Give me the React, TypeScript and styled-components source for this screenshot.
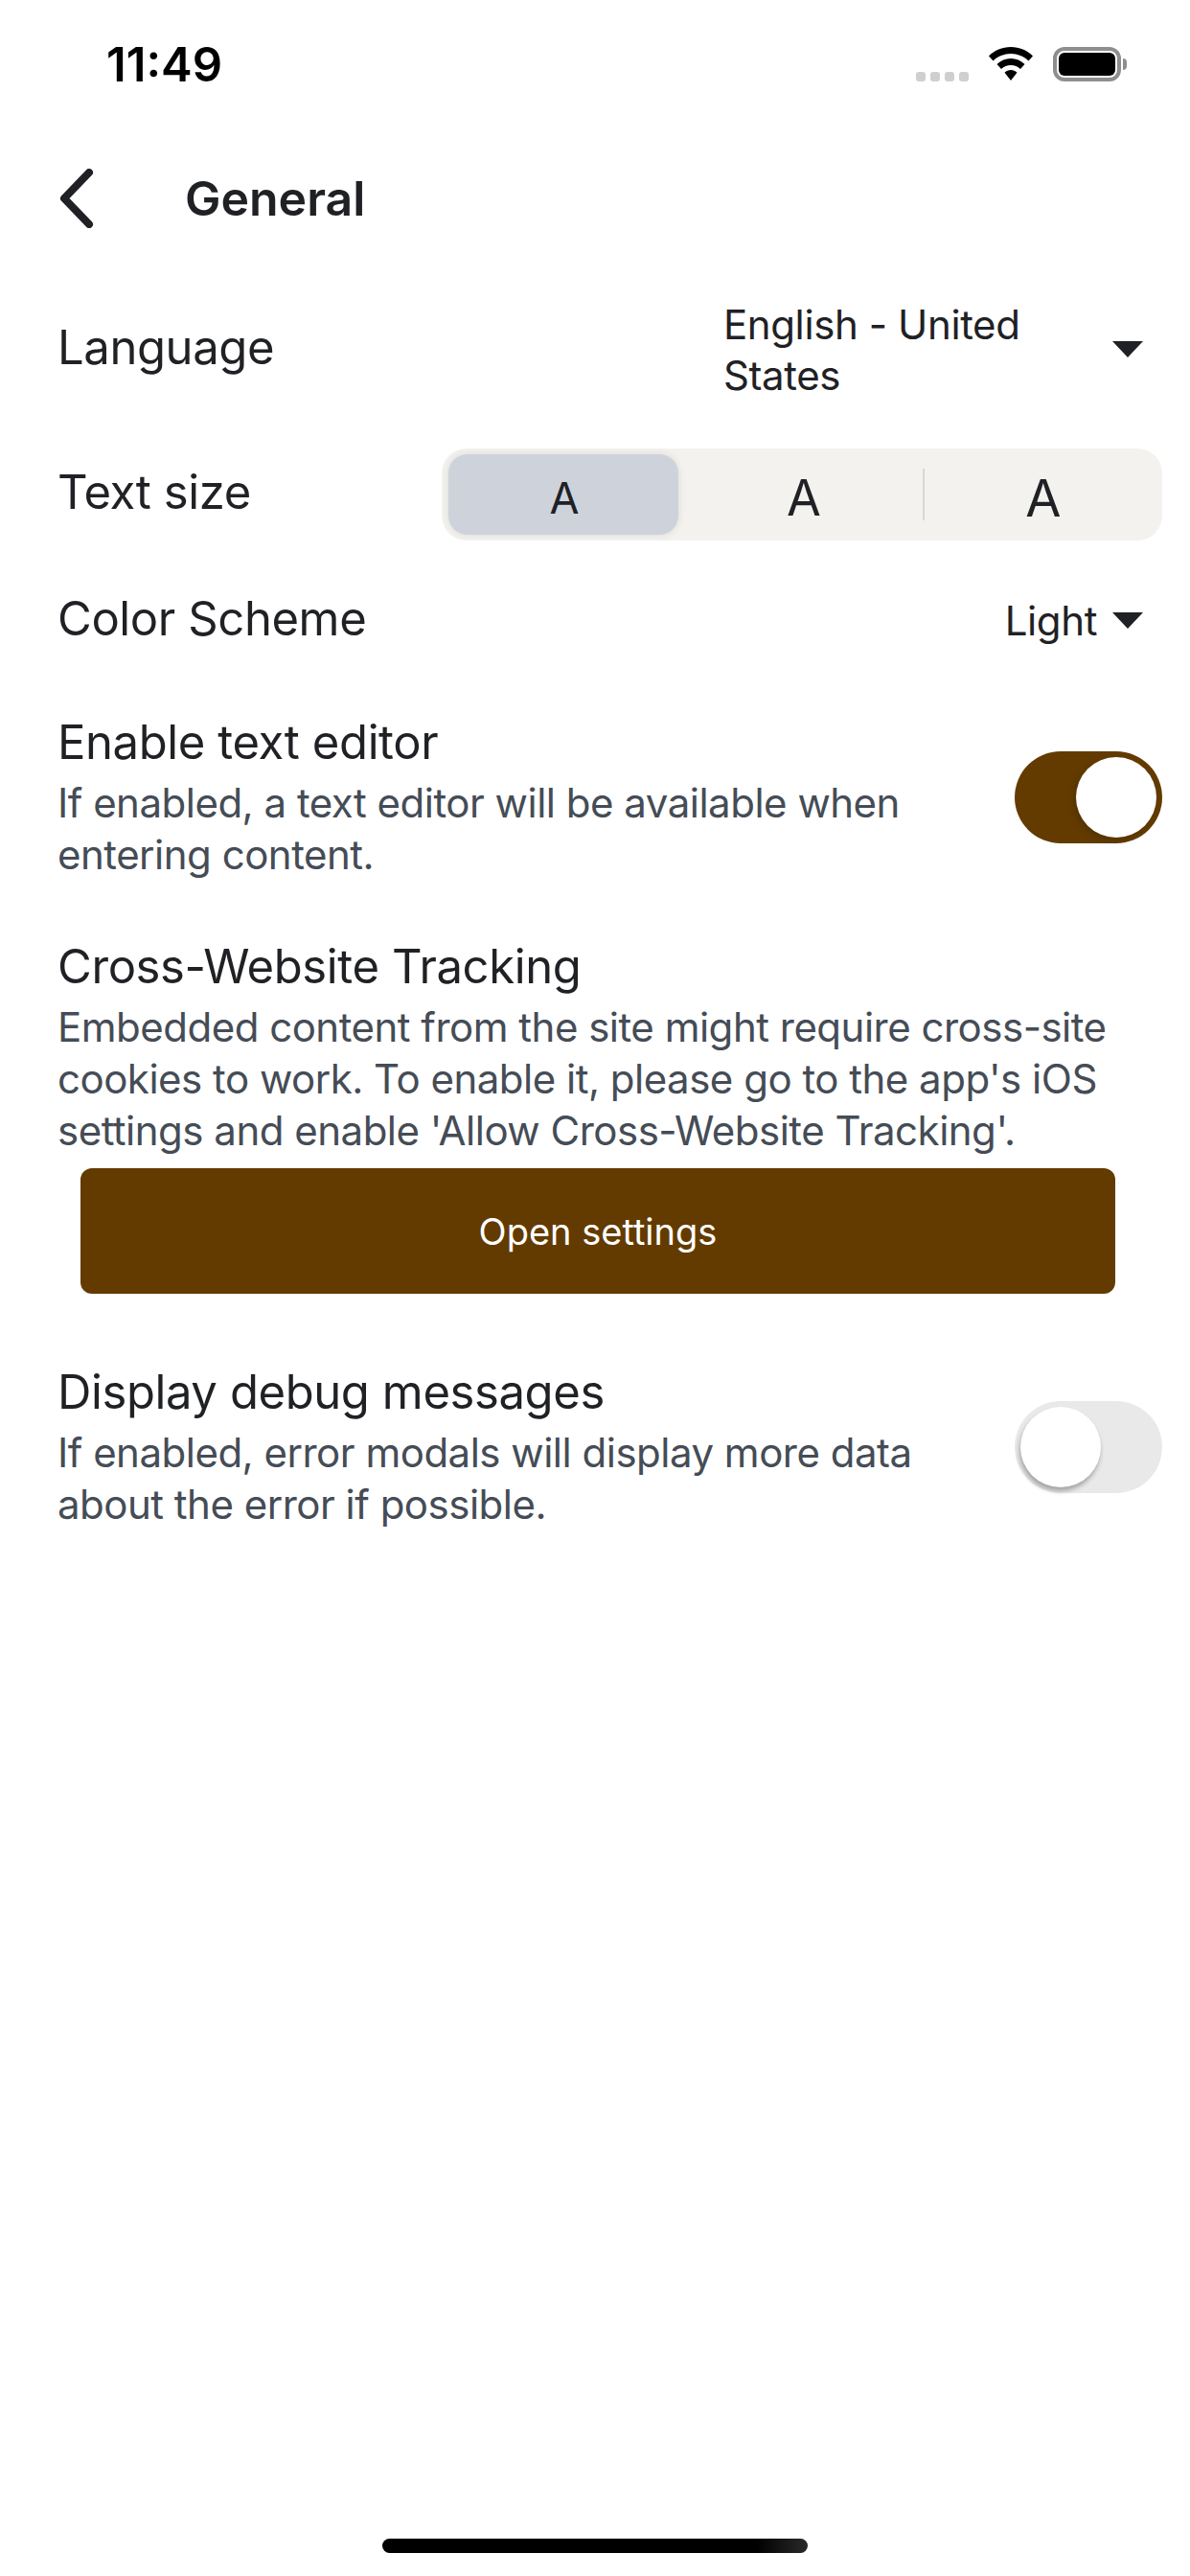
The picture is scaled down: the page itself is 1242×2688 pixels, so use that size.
import React from 'react';
import styled, { createGlobalStyle } from 'styled-components';

const GlobalStyle = createGlobalStyle`
	html, body {
		margin: 0;
		padding: 0;
		background: #fff;
	}
`;

const Screen = styled.div`
	width: 1242px;
	height: 2688px;
	display: flex;
	flex-direction: column;
	background: #fff;
	font-family: 'Inter', 'Liberation Sans', sans-serif;
	color: #1f2125;
	overflow: hidden;
`;

const StatusBar = styled.div`
	height: 132px;
	box-sizing: border-box;
	padding: 39px 72px 0 111px;
	display: flex;
	justify-content: space-between;
	align-items: flex-start;
	flex-shrink: 0;
`;

const Clock = styled.span`
	font-size: 49px;
	line-height: 58px;
	font-weight: 600;
	color: #000;
`;

const StatusIcons = styled.div`
	display: flex;
	align-items: flex-end;
	gap: 20px;
	height: 36px;
	margin-top: 10px;
`;

const SignalDots = styled.div`
	display: flex;
	gap: 5px;
`;

const SignalDot = styled.span`
	width: 10px;
	height: 10px;
	border-radius: 3px;
	background: #cfcfcf;
`;

const Battery = styled.div`
	width: 71px;
	height: 36px;
	box-sizing: border-box;
	border: 4px solid #8e8e8e;
	border-radius: 12px;
	padding: 2px;
	position: relative;

	&::before {
		content: '';
		display: block;
		height: 100%;
		border-radius: 6px;
		background: #000;
	}

	&::after {
		content: '';
		position: absolute;
		right: -10px;
		top: 8px;
		width: 4px;
		height: 12px;
		border-radius: 0 4px 4px 0;
		background: #8e8e8e;
	}
`;

const Header = styled.div`
	height: 150px;
	box-sizing: border-box;
	padding-left: 62px;
	display: flex;
	align-items: center;
	flex-shrink: 0;
`;

const BackButton = styled.button`
	width: 131px;
	padding: 0;
	border: 0;
	background: none;
	display: flex;
	align-items: center;
	color: #1f2125;
`;

const Title = styled.h1`
	margin: 0;
	font-size: 50px;
	line-height: 60px;
	font-weight: 600;
`;

const Content = styled.div`
	display: flex;
	flex-direction: column;
	padding: 0 29px 0 60px;
`;

const Row = styled.div<{ $height: number }>`
	display: flex;
	align-items: center;
	justify-content: space-between;
	height: ${(props) => props.$height}px;
`;

const Label = styled.div<{ $lift?: number }>`
	font-size: 49px;
	line-height: 60px;
	font-weight: 400;
	letter-spacing: -0.4px;
	${(props) => props.$lift && `margin-top: -${props.$lift}px;`}
`;

const LanguageValue = styled.div`
	width: 400px;
	font-size: 42px;
	line-height: 53px;
	letter-spacing: -0.4px;
`;

const Picker = styled.div<{ $width?: number }>`
	display: flex;
	align-items: center;
	justify-content: space-between;
	padding-right: 20px;
	margin-top: 3px;
	${(props) => props.$width && `width: ${props.$width}px;`}
	box-sizing: border-box;
`;

const Caret = styled.span<{ $gap?: number }>`
	width: 0;
	height: 0;
	margin-left: ${(props) => props.$gap ?? 12}px;
	border-left: 16px solid transparent;
	border-right: 16px solid transparent;
	border-top: 17px solid #1f2125;
`;

const PickerText = styled.span`
	font-size: 42px;
	line-height: 53px;
	letter-spacing: -0.4px;
`;

const Segmented = styled.div`
	width: 752px;
	height: 96px;
	box-sizing: border-box;
	padding: 6px 5px 6px 7px;
	border-radius: 26px;
	background: #f3f2ef;
	display: grid;
	grid-template-columns: repeat(3, 240px);
	gap: 10px;
`;

const Segment = styled.div<{ $active?: boolean; $size: number; $divider?: boolean }>`
	display: flex;
	align-items: center;
	justify-content: center;
	padding: 6px 0 0 2px;
	border-radius: 20px;
	font-size: ${(props) => props.$size}px;
	background: ${(props) => (props.$active ? '#ced3db' : 'transparent')};
	box-shadow: ${(props) => (props.$active ? '0 0 8px rgba(0, 0, 0, 0.1)' : 'none')};
	position: relative;

	${(props) =>
		props.$divider &&
		`&::before {
			content: '';
			position: absolute;
			left: -5px;
			top: 15px;
			bottom: 15px;
			width: 2px;
			background: #d9d8d4;
		}`}
`;

const ToggleRow = styled.div<{ $marginTop: number }>`
	display: flex;
	align-items: center;
	justify-content: space-between;
	margin-top: ${(props) => props.$marginTop}px;
`;

const TextBlock = styled.div`
	width: 900px;
`;

const Description = styled.div`
	margin-top: 6px;
	font-size: 42px;
	line-height: 54px;
	letter-spacing: -0.5px;
	color: #454c56;
`;

const Track = styled.div<{ $on: boolean }>`
	width: 154px;
	height: 96px;
	box-sizing: border-box;
	padding: 6px;
	border-radius: 48px;
	flex-shrink: 0;
	display: flex;
	justify-content: ${(props) => (props.$on ? 'flex-end' : 'flex-start')};
	background: ${(props) => (props.$on ? '#633b00' : '#e9e9e9')};
`;

const Knob = styled.div<{ $on: boolean }>`
	width: 84px;
	height: 84px;
	border-radius: 50%;
	background: #fff;
	box-shadow: ${(props) =>
		props.$on ? '-3px 3px 6px rgba(0, 0, 0, 0.15)' : '-1px 4px 5px rgba(0, 0, 0, 0.3)'};
`;

const Section = styled.div`
	margin-top: 60px;
`;

const OpenSettings = styled.button`
	display: block;
	width: 1080px;
	height: 131px;
	margin: 12px 0 0 24px;
	border: 0;
	border-radius: 12px;
	background: #633b00;
	color: #fff;
	font-family: inherit;
	font-size: 38px;
	font-weight: 400;
`;

const Spacer = styled.div`
	flex: 1;
`;

const HomeIndicator = styled.div`
	width: 444px;
	height: 15px;
	margin: 0 auto 24px;
	border-radius: 8px;
	background: linear-gradient(90deg, #000 0%, #000 88%, #2a2a2a 100%);
	flex-shrink: 0;
`;

const App: React.FC = () => {
	return (
		<Screen>
			<GlobalStyle />
			<StatusBar>
				<Clock>11:49</Clock>
				<StatusIcons>
					<SignalDots>
						<SignalDot />
						<SignalDot />
						<SignalDot />
						<SignalDot />
					</SignalDots>
					<svg width="48" height="36" viewBox="0 0 48 36">
						<path
							d="M24 0C15 0 7 3.500 1 9.500L5.500 14.500C10.500 9.800 17 7 24 7C31 7 37.500 9.800 42.500 14.500L47 9.500C41 3.500 33 0 24 0Z"
							fill="#000"
						/>
						<path
							d="M24 12C18.500 12 13.500 14.200 9.500 18L14 23C16.800 20.500 20.200 19 24 19C27.800 19 31.200 20.500 34 23L38.500 18C34.500 14.200 29.500 12 24 12Z"
							fill="#000"
						/>
						<path d="M24 24C21.500 24 19.500 25 17.500 26.700L24 35L30.500 26.700C28.500 25 26.500 24 24 24Z" fill="#000" />
					</svg>
					<Battery />
				</StatusIcons>
			</StatusBar>

			<Header>
				<BackButton>
					<svg width="36" height="62" viewBox="0 0 36 62" fill="none">
						<path d="M31 4L5 31L31 58" stroke="currentColor" strokeWidth="8" strokeLinecap="round" strokeLinejoin="round" />
					</svg>
				</BackButton>
				<Title>General</Title>
			</Header>

			<Content>
				<Row $height={162}>
					<Label>Language</Label>
					<Picker $width={458}>
						<LanguageValue>English - United States</LanguageValue>
						<Caret />
					</Picker>
				</Row>

				<Row $height={144}>
					<Label $lift={4}>Text size</Label>
					<Segmented>
						<Segment $active $size={45}>A</Segment>
						<Segment $size={52}>A</Segment>
						<Segment $size={54} $divider>A</Segment>
					</Segmented>
				</Row>

				<Row $height={116}>
					<Label>Color Scheme</Label>
					<Picker>
						<PickerText>Light</PickerText>
						<Caret $gap={16} />
					</Picker>
				</Row>

				<ToggleRow $marginTop={41}>
					<TextBlock>
						<Label>Enable text editor</Label>
						<Description>If enabled, a text editor will be available when entering content.</Description>
					</TextBlock>
					<Track $on>
						<Knob $on />
					</Track>
				</ToggleRow>

				<Section>
					<Label>Cross-Website Tracking</Label>
					<Description>
						Embedded content from the site might require cross-site cookies to work. To enable it, please go to the
						app's iOS settings and enable 'Allow Cross-Website Tracking'.
					</Description>
					<OpenSettings>Open settings</OpenSettings>
				</Section>

				<ToggleRow $marginTop={73}>
					<TextBlock>
						<Label>Display debug messages</Label>
						<Description>If enabled, error modals will display more data about the error if possible.</Description>
					</TextBlock>
					<Track $on={false}>
						<Knob $on={false} />
					</Track>
				</ToggleRow>
			</Content>

			<Spacer />
			<HomeIndicator />
		</Screen>
	);
};

export default App;
